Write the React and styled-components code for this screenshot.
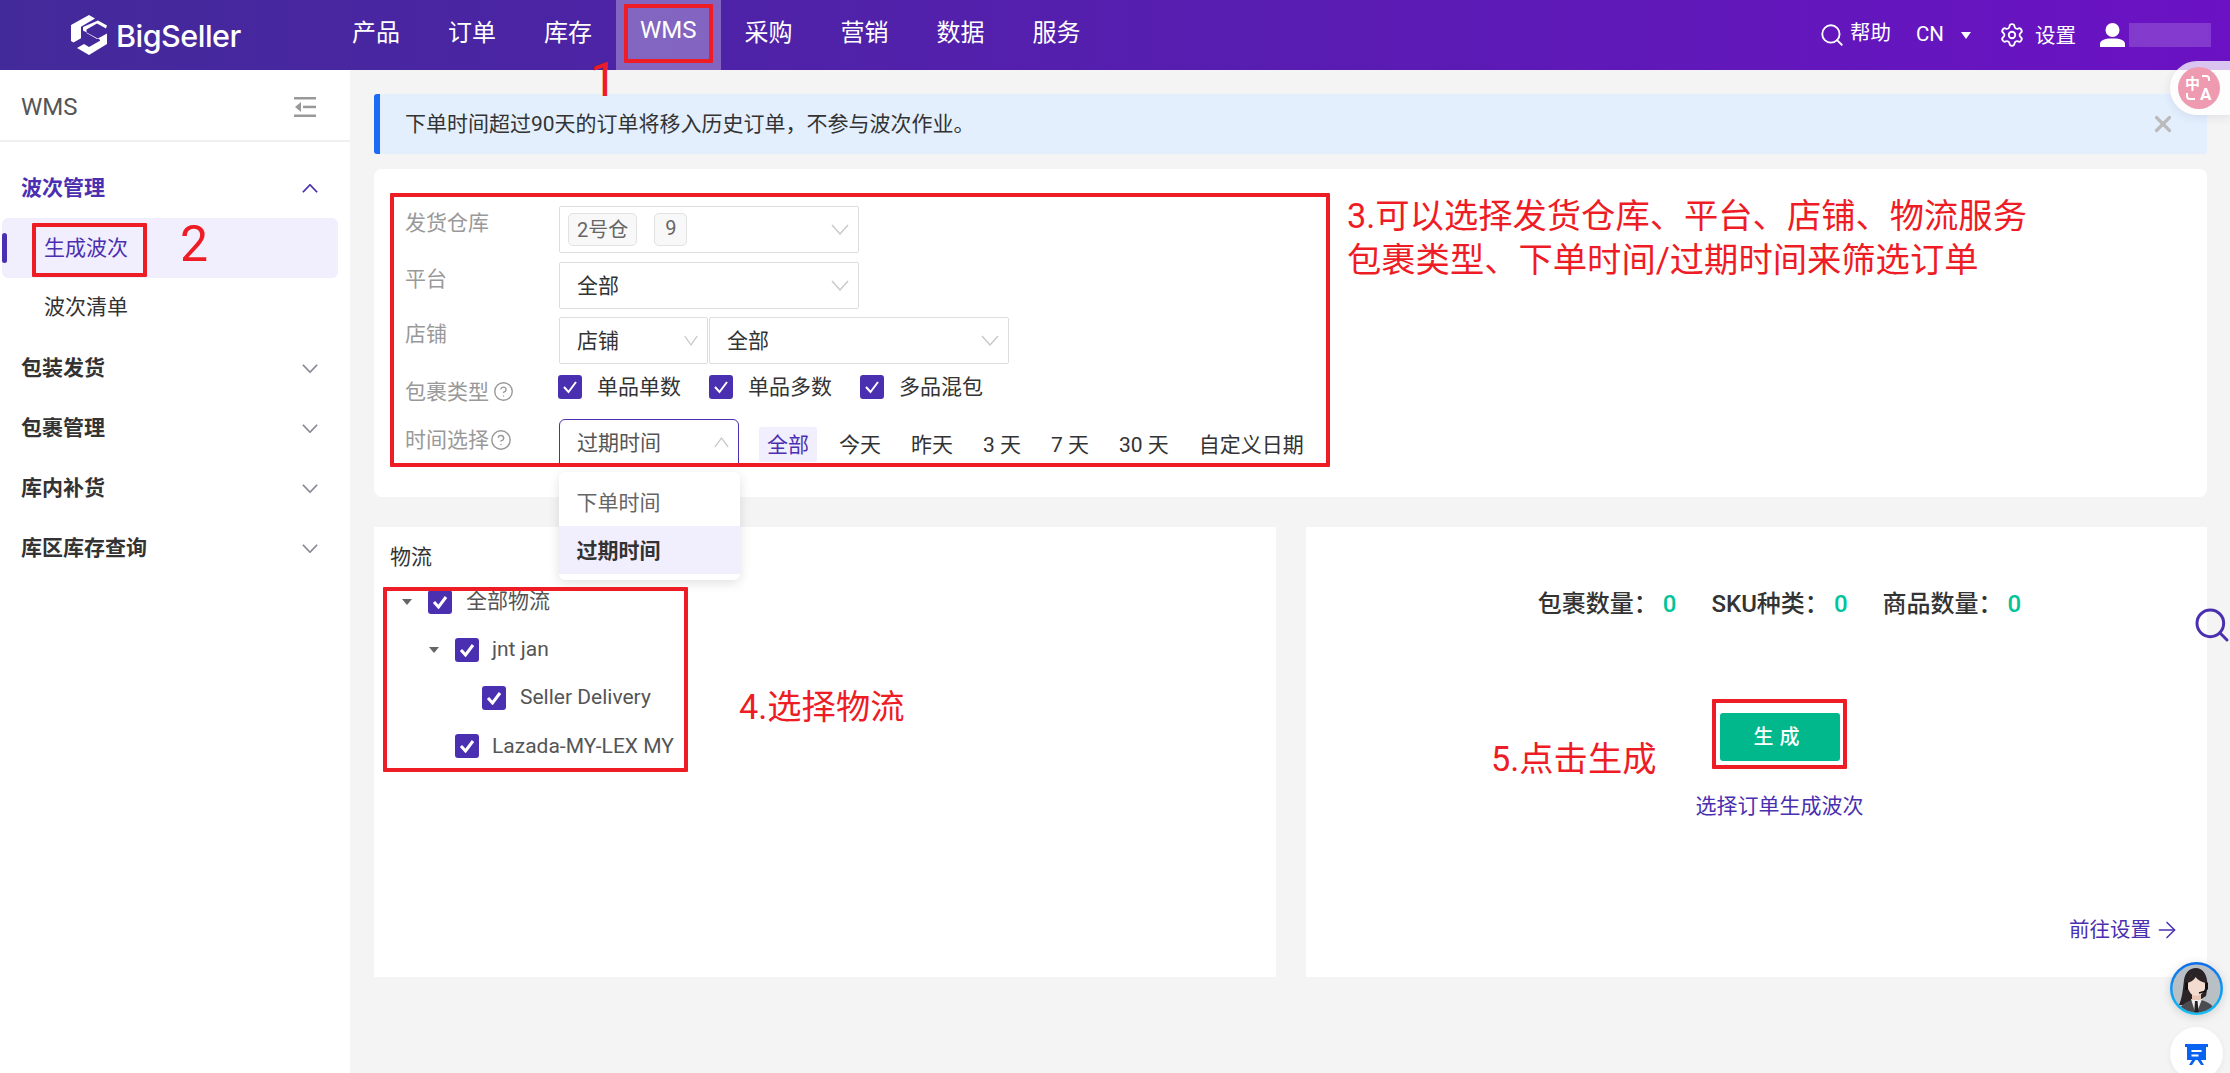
import React from 'react'
import styled, { createGlobalStyle } from 'styled-components'
import { Search, Settings, ArrowRight, CircleHelp, X } from 'lucide-react'

const font = `Roboto, "Noto Sans CJK SC", sans-serif`
const purple = '#4a30b0'
const annotRed = '#ee1c25'

const GlobalStyle = createGlobalStyle`
  html, body { margin: 0; padding: 0; background: #f4f4f4; }
  body { font-family: ${font}; font-size: 21px; color: #333; }
  * { box-sizing: border-box; }
`

const Page = styled.div`
  position: relative;
  width: 2230px;
  height: 1073px;
  overflow: hidden;
  background: #f4f4f4;
`

const Header = styled.header`
  display: flex;
  align-items: stretch;
  height: 70px;
  padding-right: 19px;
  color: #fff;
  background: linear-gradient(90deg, #432a9a 0%, #4f22a8 35%, #6b12c4 100%);
`

const Logo = styled.div`
  display: flex;
  align-items: center;
  gap: 8px;
  width: 328px;
  padding-left: 71px;
`

const LogoText = styled.span`
  font-family: Inter, sans-serif;
  font-size: 30.500px;
  font-weight: 500;
  letter-spacing: -0.5px;
`

const Nav = styled.nav`
  display: flex;
`

const NavItem = styled.a`
  display: flex;
  align-items: center;
  padding: 0 24px 10px;
  font-size: 24px;
  font-weight: 400;
  background: ${p => (p.$active ? 'rgba(255,255,255,.3)' : 'transparent')};
`

const HeaderRight = styled.div`
  display: flex;
  align-items: center;
  margin-left: auto;
  font-size: 20.500px;
`

const HelpLink = styled.span`
  display: flex;
  align-items: center;
  gap: 5px;
  margin-top: -9px;
  margin-right: 25px;
  svg { margin-top: 9px; }
`

const Lang = styled.span`
  display: flex;
  align-items: center;
  gap: 17px;
  margin-top: -3px;
  margin-right: 28px;
  &::after {
    content: '';
    margin-top: 3px;
    border-left: 5px solid transparent;
    border-right: 5px solid transparent;
    border-top: 7px solid #fff;
  }
`

const SettingLink = styled.span`
  display: flex;
  align-items: center;
  gap: 10px;
  margin-top: -3px;
  margin-right: 24px;
  svg { margin-top: 3px; }
`

const UserName = styled.span`
  width: 82px;
  height: 24px;
  margin-left: 4px;
  background: rgba(255, 255, 255, 0.17);
`

const Body = styled.div`
  display: flex;
  height: 1003px;
`

const Sidebar = styled.aside`
  flex: 0 0 350px;
  background: #fff;
`

const SideHead = styled.div`
  display: flex;
  align-items: center;
  justify-content: space-between;
  height: 72px;
  padding: 3px 34px 0 21px;
  font-size: 24px;
  color: #555;
  border-bottom: 2px solid #f0f0f0;
`

const Menu = styled.ul`
  list-style: none;
  margin: 0;
  padding: 15px 0 0;
`

const MenuGroup = styled.li`
  display: flex;
  align-items: center;
  justify-content: space-between;
  height: 60px;
  padding: 0 32px 3px 21px;
  font-weight: 700;
  color: ${p => (p.$open ? purple : '#333')};
  svg { margin-top: 6px; }
`

const MenuItem = styled.li`
  position: relative;
  display: flex;
  align-items: center;
  height: 60px;
  margin: ${p => (p.$active ? '1px 12px -1px 2px' : '0 12px 0 2px')};
  padding: 0 0 4px 42px;
  border-radius: 6px;
  color: ${p => (p.$active ? purple : '#333')};
  background: ${p => (p.$active ? '#f1eefd' : 'transparent')};
  &::before {
    content: ${p => (p.$active ? "''" : 'none')};
    position: absolute;
    left: 0;
    top: 15px;
    width: 5px;
    height: 30px;
    border-radius: 3px;
    background: ${purple};
  }
`

const Main = styled.main`
  flex: 1;
  padding: 24px 23px 0 24px;
`

const Notice = styled.div`
  display: flex;
  align-items: center;
  justify-content: space-between;
  height: 60px;
  padding: 0 31px 4px 25px;
  color: #333;
  background: #e3effd;
  border-left: 6px solid #1a6cf5;
  border-radius: 3px;
  svg { margin-top: 4px; }
`

const FilterCard = styled.section`
  height: 328px;
  margin-top: 15px;
  padding-top: 37px;
  border-radius: 8px;
  background: #fff;
`

const FormRow = styled.div`
  display: flex;
  align-items: flex-start;
  height: ${p => p.$h || 47}px;
  margin-bottom: ${p => p.$mb || 0}px;
`

const Label = styled.div`
  display: flex;
  align-items: center;
  flex: 0 0 185px;
  gap: ${p => p.$gap || 0}px;
  height: 34px;
  margin-top: ${p => p.$top || 0}px;
  padding: 0 0 5px 31px;
  color: #999;
  white-space: nowrap;
  svg { margin-top: 4px; }
`

const SelectBox = styled.div`
  position: relative;
  display: flex;
  align-items: center;
  justify-content: space-between;
  flex: 0 0 ${p => p.$w || 300}px;
  height: 47px;
  margin-right: ${p => p.$mr || 0}px;
  padding: 0 9px 4px 17px;
  border: 1.500px solid ${p => (p.$open ? purple : '#ddd')};
  border-radius: ${p => (p.$open ? '6px 6px 2px 2px' : '2px')};
  color: ${p => (p.$open ? '#555' : '#333')};
  background: #fff;
  > svg { margin-top: 4px; }
`

const Tags = styled.div`
  display: flex;
  gap: 17px;
  margin: 4px 0 0 -9px;
`

const Tag = styled.span`
  display: inline-flex;
  align-items: center;
  justify-content: center;
  min-width: 33px;
  height: 33px;
  padding: 0 8px 3px;
  border: 1.500px solid #e2e2e2;
  border-radius: 5px;
  font-size: 20px;
  color: #666;
  background: #f8f8f8;
`

const ChevronSvg = styled.svg`
  flex: none;
  fill: none;
  stroke: ${p => p.$color || '#c6c6c6'};
  stroke-width: ${p => p.$sw || 1.3};
  transform: ${p => (p.$up ? 'rotate(180deg)' : 'none')};
`

const Chevron = ({ w = 18, h = 11, color, sw, up }) => (
  <ChevronSvg width={w} height={h} viewBox="0 0 18 11" preserveAspectRatio="none" $color={color} $sw={sw} $up={up}>
    <path d="M1 1l8 9 8-9" />
  </ChevronSvg>
)

const Checks = styled.div`
  display: flex;
  gap: 28px;
  height: 24px;
  margin-left: -1px;
`

const CheckLabel = styled.label`
  display: flex;
  align-items: center;
  gap: ${p => p.$gap || 15}px;
  line-height: 24px;
  white-space: nowrap;
`

const Box = styled.span`
  display: inline-flex;
  align-items: center;
  justify-content: center;
  width: 24px;
  height: 24px;
  border-radius: 3px;
  background: ${purple};
`

const CheckBox = ({ bold }) => (
  <Box>
    <svg width="16" height="14" viewBox="0 0 16 14" fill="none" stroke="#fff" strokeWidth={bold ? 3 : 2}>
      <path d="M2 7l4.500 5L14 2" />
    </svg>
  </Box>
)

const Ranges = styled.div`
  display: flex;
  gap: 14px;
  margin-top: 8px;
`

const RangeBtn = styled.span`
  display: flex;
  align-items: center;
  height: 35px;
  padding: 0 8px 4px;
  border-radius: 2px;
  white-space: nowrap;
  color: ${p => (p.$active ? purple : '#333')};
  background: ${p => (p.$active ? '#f1eefd' : 'transparent')};
`

const Dropdown = styled.div`
  position: absolute;
  z-index: 3;
  left: -1.500px;
  right: -1.500px;
  top: 52px;
  padding: 6px 0;
  border-radius: 6px;
  background: #fff;
  box-shadow: 0 3px 12px rgba(0, 0, 0, 0.12);
`

const DropItem = styled.div`
  display: flex;
  align-items: center;
  height: 48px;
  padding: 0 0 3px 18px;
  font-weight: ${p => (p.$active ? 700 : 400)};
  color: ${p => (p.$active ? '#333' : '#666')};
  background: ${p => (p.$active ? '#f1eefd' : 'transparent')};
`

const Cards = styled.div`
  display: grid;
  grid-template-columns: 902px 901px;
  gap: 30px;
  margin-top: 30px;
`

const Card = styled.section`
  position: relative;
  display: flex;
  flex-direction: column;
  height: 450px;
  background: #fff;
`

const LogisticsCard = styled(Card)`
  padding: 15px 16px 0;
`

const CardTitle = styled.div`
  height: 30px;
  margin-bottom: 6px;
  line-height: 30px;
  color: #333;
`

const TreeRow = styled.div`
  display: flex;
  align-items: center;
  height: 48px;
  padding-left: ${p => 12 + p.$level * 27}px;
  color: #555;
  white-space: nowrap;
`

const TreeText = styled.span`
  margin-top: -3px;
`

const Toggle = styled.span`
  flex: 0 0 26px;
  &::before {
    content: ${p => (p.$empty ? 'none' : "''")};
    display: block;
    width: 0;
    border-left: 5px solid transparent;
    border-right: 5px solid transparent;
    border-top: 6px solid #666;
  }
`

const SummaryCard = styled(Card)`
  align-items: center;
  padding: 60px 32px 32px 78px;
`

const Stats = styled.div`
  display: flex;
  gap: 35px;
  font-size: 24px;
  font-weight: 500;
  line-height: 34px;
  color: #333;
  white-space: nowrap;
`

const StatValue = styled.span`
  margin-left: 5px;
  color: #00c49a;
`

const GenerateBtn = styled.button`
  width: 120px;
  height: 48px;
  margin-top: 92px;
  padding: 0 0 3px;
  border: none;
  border-radius: 3px;
  font-family: ${font};
  font-size: 20px;
  font-weight: 500;
  letter-spacing: 6px;
  color: #fff;
  background: #00b88c;
`

const Caption = styled.div`
  margin-top: 30px;
  line-height: 30px;
  color: ${purple};
`

const SettingsLink = styled.a`
  display: flex;
  align-items: center;
  gap: 3px;
  align-self: flex-end;
  margin-top: auto;
  line-height: 30px;
  font-size: 20.500px;
  color: ${purple};
  svg { margin-right: -5px; }
`

const RedBox = styled.div`
  position: absolute;
  z-index: 5;
  left: ${p => p.$x}px;
  top: ${p => p.$y}px;
  width: ${p => p.$w}px;
  height: ${p => p.$h}px;
  border: 4px solid ${annotRed};
  border-radius: 1px;
  pointer-events: none;
`

const Annot = styled.div`
  position: absolute;
  z-index: 5;
  left: ${p => p.$x}px;
  top: ${p => p.$y}px;
  font-family: Roboto, "Noto Sans CJK SC", sans-serif;
  font-size: ${p => p.$size || 34.3}px;
  line-height: ${p => p.$lh || 44}px;
  color: ${annotRed};
  white-space: nowrap;
`

const TranslatePill = styled.div`
  position: absolute;
  z-index: 6;
  left: 2170px;
  right: 0;
  top: 61px;
  display: flex;
  align-items: center;
  height: 54px;
  padding-left: 8px;
  border-radius: 27px 0 0 27px;
  background: linear-gradient(180deg, rgba(255, 255, 255, 0.75) 0 9px, #fdfdfe 9px);
  box-shadow: 0 2px 10px rgba(70, 70, 120, 0.12);
`

const TranslateIcon = styled.svg`
  width: 42px;
  height: 42px;
`

const FloatSearch = styled.div`
  position: absolute;
  z-index: 6;
  left: 2192px;
  top: 605px;
  color: ${purple};
`

const Avatar = styled.svg`
  position: absolute;
  z-index: 6;
  left: 2170px;
  top: 962px;
  width: 53px;
  height: 53px;
  filter: drop-shadow(0 2px 5px rgba(0, 0, 0, 0.15));
`

const ChatBtn = styled.div`
  position: absolute;
  z-index: 6;
  left: 2170px;
  top: 1027px;
  display: flex;
  justify-content: center;
  width: 53px;
  height: 53px;
  padding-top: 17px;
  border-radius: 50%;
  background: #fff;
  box-shadow: 0 2px 6px rgba(0, 0, 0, 0.06);
`

const menuGroups = ['包装发货', '包裹管理', '库内补货', '库区库存查询']
const navItems = ['产品', '订单', '库存', 'WMS', '采购', '营销', '数据', '服务']
const ranges = ['全部', '今天', '昨天', '3 天', '7 天', '30 天', '自定义日期']

const LogoMark = () => (
  <svg width="37" height="40" viewBox="0 0 37 40">
    <path fill="#fff" d="M18 0l6 3.500-14 8.200v11.600L2.500 27.600 0 26V10z" />
    <path fill="#fff" d="M27 5.500L36 10.500l-1 3-9-5-10.500 6v3.600L26 24l10-5.500V29L18 40 6 33l7-4 5 3 11-6.300v-1L12 15.500V12z" />
  </svg>
)

const App = () => (
  <Page>
    <GlobalStyle />
    <Header>
      <Logo>
        <LogoMark />
        <LogoText>BigSeller</LogoText>
      </Logo>
      <Nav>
        {navItems.map(item => (
          <NavItem key={item} $active={item === 'WMS'}>{item}</NavItem>
        ))}
      </Nav>
      <HeaderRight>
        <HelpLink><Search size={26} strokeWidth={1.7} />帮助</HelpLink>
        <Lang>CN</Lang>
        <SettingLink><Settings size={26} strokeWidth={1.7} />设置</SettingLink>
        <svg width="25" height="24" viewBox="0 0 25 24" fill="#fff">
          <circle cx="12.500" cy="7" r="7" />
          <path d="M0 24v-3c0-3.500 4-5.500 12.500-5.500S25 17.500 25 21v3z" />
        </svg>
        <UserName />
      </HeaderRight>
    </Header>

    <Body>
      <Sidebar>
        <SideHead>
          WMS
          <svg width="22" height="20" viewBox="0 0 22 20" fill="#999">
            <rect width="22" height="2.500" />
            <rect y="17.500" width="22" height="2.500" />
            <rect x="9" y="8.700" width="13" height="2.500" />
            <path d="M7 5v10l-6-5z" />
          </svg>
        </SideHead>
        <Menu>
          <MenuGroup $open>波次管理<Chevron w={16} h={9} color={purple} sw={2} up /></MenuGroup>
          <MenuItem $active>生成波次</MenuItem>
          <MenuItem>波次清单</MenuItem>
          {menuGroups.map(g => (
            <MenuGroup key={g}>{g}<Chevron w={16} h={9} color="#8a8a96" sw={2} /></MenuGroup>
          ))}
        </Menu>
      </Sidebar>

      <Main>
        <Notice>
          下单时间超过90天的订单将移入历史订单，不参与波次作业。
          <X size={26} color="#bbb" strokeWidth={3} />
        </Notice>

        <FilterCard>
          <FormRow $mb={9}>
            <Label>发货仓库</Label>
            <SelectBox>
              <Tags><Tag>2号仓</Tag><Tag>9</Tag></Tags>
              <Chevron />
            </SelectBox>
          </FormRow>
          <FormRow $mb={8}>
            <Label>平台</Label>
            <SelectBox>全部<Chevron /></SelectBox>
          </FormRow>
          <FormRow $mb={11}>
            <Label>店铺</Label>
            <SelectBox $w={149} $mr={1}>店铺<Chevron w={14} h={11} /></SelectBox>
            <SelectBox>全部<Chevron /></SelectBox>
          </FormRow>
          <FormRow $h={24} $mb={20}>
            <Label $gap={4}>包裹类型<CircleHelp size={21} strokeWidth={1.6} /></Label>
            <Checks>
              <CheckLabel><CheckBox />单品单数</CheckLabel>
              <CheckLabel><CheckBox />单品多数</CheckLabel>
              <CheckLabel><CheckBox />多品混包</CheckLabel>
            </Checks>
          </FormRow>
          <FormRow>
            <Label $top={4} $gap={1}>时间选择<CircleHelp size={22} strokeWidth={1.6} /></Label>
            <SelectBox $w={180} $mr={20} $open>
              过期时间
              <Chevron w={15} h={11} up />
              <Dropdown>
                <DropItem>下单时间</DropItem>
                <DropItem $active>过期时间</DropItem>
              </Dropdown>
            </SelectBox>
            <Ranges>
              {ranges.map((r, i) => (
                <RangeBtn key={r} $active={i === 0}>{r}</RangeBtn>
              ))}
            </Ranges>
          </FormRow>
        </FilterCard>

        <Cards>
          <LogisticsCard>
            <CardTitle>物流</CardTitle>
            <TreeRow $level={0}><Toggle /><CheckLabel $gap={14}><CheckBox bold /><TreeText>全部物流</TreeText></CheckLabel></TreeRow>
            <TreeRow $level={1}><Toggle /><CheckLabel $gap={13}><CheckBox bold /><TreeText>jnt jan</TreeText></CheckLabel></TreeRow>
            <TreeRow $level={2}><Toggle $empty /><CheckLabel $gap={14}><CheckBox bold /><TreeText>Seller Delivery</TreeText></CheckLabel></TreeRow>
            <TreeRow $level={1}><Toggle $empty /><CheckLabel $gap={13}><CheckBox bold />Lazada-MY-LEX MY</CheckLabel></TreeRow>
          </LogisticsCard>

          <SummaryCard>
            <Stats>
              <span>包裹数量：<StatValue>0</StatValue></span>
              <span>SKU种类：<StatValue>0</StatValue></span>
              <span>商品数量：<StatValue>0</StatValue></span>
            </Stats>
            <GenerateBtn>生成</GenerateBtn>
            <Caption>选择订单生成波次</Caption>
            <SettingsLink>前往设置<ArrowRight size={26} strokeWidth={1.4} /></SettingsLink>
          </SummaryCard>
        </Cards>
      </Main>
    </Body>

    {/* red annotations drawn over the page */}
    <RedBox $x={624} $y={4} $w={89} $h={59} />
    <Annot $x={590} $y={50} $size={48} $lh={60}>1</Annot>
    <RedBox $x={32} $y={223} $w={115} $h={54} />
    <Annot $x={180} $y={214} $size={50} $lh={60}>2</Annot>
    <RedBox $x={390} $y={193} $w={940} $h={274} />
    <Annot $x={1347} $y={194}>3.可以选择发货仓库、平台、店铺、物流服务</Annot>
    <Annot $x={1347} $y={238}>包裹类型、下单时间/过期时间来筛选订单</Annot>
    <RedBox $x={383} $y={587} $w={305} $h={185} />
    <Annot $x={739} $y={685}>4.选择物流</Annot>
    <RedBox $x={1712} $y={699} $w={135} $h={70} />
    <Annot $x={1491} $y={737}>5.点击生成</Annot>

    <TranslatePill>
      <TranslateIcon viewBox="0 0 42 42">
        <circle cx="21" cy="21" r="21" fill="#ee9ab0" />
        <text x="7" y="22" fontSize="15" fontWeight="700" fill="#fff" fontFamily="Noto Sans CJK SC, sans-serif">中</text>
        <text x="22" y="33" fontSize="17" fontWeight="700" fill="#fff" fontFamily="Roboto, sans-serif">A</text>
        <path d="M24 9h4a3 3 0 0 1 3 3v2M9 26v3a3 3 0 0 0 3 3h5" fill="none" stroke="#fff" strokeWidth="2" />
      </TranslateIcon>
    </TranslatePill>

    <FloatSearch><Search size={40} strokeWidth={1.8} /></FloatSearch>

    <Avatar viewBox="0 0 53 53">
      <defs>
        <linearGradient id="ring" x1="0" y1="0" x2="0" y2="1">
          <stop offset="0" stopColor="#0f6bea" />
          <stop offset="1" stopColor="#12c0f5" />
        </linearGradient>
        <clipPath id="face"><circle cx="26.500" cy="26.500" r="24" /></clipPath>
      </defs>
      <circle cx="26.500" cy="26.500" r="26.500" fill="url(#ring)" />
      <g clipPath="url(#face)">
        <rect width="53" height="53" fill="#b8bfc5" />
        <path d="M26 6c-7 0-11 5-12 12-1 9-2 19-5 25h13l14-9c1-5 2-11 1-16-1-7-5-12-11-12z" fill="#2a2426" />
        <path d="M8 53c1-9 7-13 14-15h9c8 2 14 6 15 15z" fill="#4b4b50" />
        <path d="M21 37l5 16 6-16z" fill="#f1efee" />
        <path d="M25 39h2.500l1.500 14h-5z" fill="#222" />
        <rect x="22" y="28" width="9" height="10" fill="#e8c6b6" />
        <ellipse cx="26.500" cy="23" rx="9" ry="11" fill="#f4dbcf" />
        <path d="M17.500 21c1-7 6-10 9.500-10 4 0 7.500 3 8.500 10-4-1-8-3-10-6-1 3-5 5-8 6z" fill="#2a2426" />
        <path d="M29 31l7-2" stroke="#111" strokeWidth="1.500" />
        <rect x="15" y="20" width="3" height="8" rx="1.500" fill="#111" />
        <rect x="35" y="20" width="3" height="8" rx="1.500" fill="#111" />
      </g>
    </Avatar>

    <ChatBtn>
      <svg width="23" height="21" viewBox="0 0 23 21">
        <path fill="#0a63f0" d="M0 0h23v3h-2v13h-5l3 5h-3l-3.500-5h-2L7 21H4l3-5H2V3H0z" />
        <rect x="6.500" y="6" width="10" height="2" fill="#fff" />
        <rect x="6.500" y="10.500" width="7" height="2" fill="#fff" />
      </svg>
    </ChatBtn>
  </Page>
)

export default App
